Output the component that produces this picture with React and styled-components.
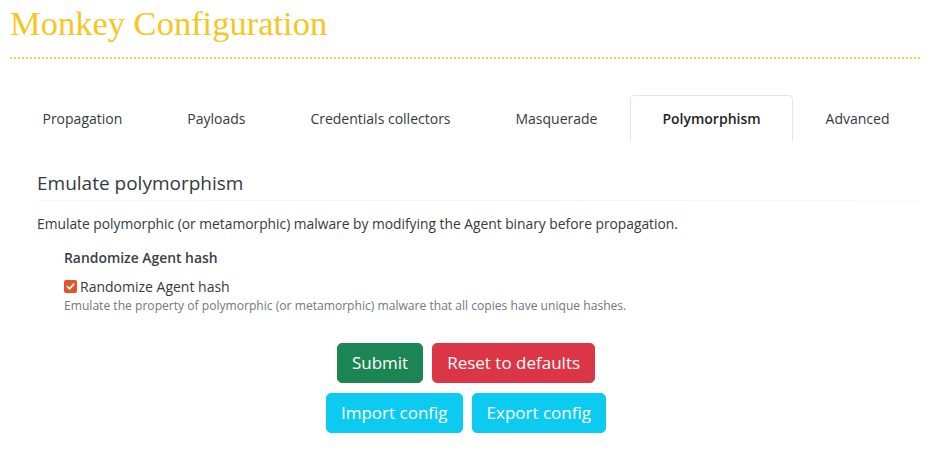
import React from "react";
import styled, { createGlobalStyle } from "styled-components";

const Global = createGlobalStyle`
  html, body { margin: 0; padding: 0; background: #fff; }
  body { font-family: "Open Sans", "Noto Sans", sans-serif; color: #333; }
  * { box-sizing: border-box; }
`;

const Page = styled.div`
  padding: 0 18px 0 10px;
  width: 940px;
`;

const TitleBar = styled.div`
  padding: 1px 0 12px;
  border-bottom: 2px dotted #f8d24e;
  width: 910px;
`;

const Title = styled.h1`
  margin: 0;
  font-family: "Liberation Serif", "DejaVu Serif", serif;
  font-weight: 400;
  font-size: 34.5px;
  line-height: 44px;
  color: #f6c623;
`;

const Tabs = styled.ul`
  list-style: none;
  margin: 36px 0 0;
  padding: 0;
  display: flex;
  width: 912px;
  border-bottom: 1px solid #e3e6ea;
`;

const Tab = styled.li`
  flex: 1 1 auto;
  text-align: center;
  padding: 12px 16px;
  font-size: 14px;
  line-height: 21px;
  margin-bottom: -1px;
  border: 1px solid ${(p) => (p.$active ? "#e3e6ea" : "transparent")};
  border-bottom-color: ${(p) => (p.$active ? "#fff" : "transparent")};
  border-radius: 5px 5px 0 0;
  background: #fff;
  color: ${(p) => (p.$active ? "#1f2326" : "#343a40")};
  font-weight: ${(p) => (p.$active ? 600 : 400)};
`;

const Content = styled.div`
  padding: 30px 0 0 27px;
  width: 912px;
`;

const Heading = styled.h3`
  margin: 0;
  font-size: 19px;
  font-weight: 400;
  line-height: 22px;
  color: #343a40;
`;

const Rule = styled.hr`
  margin: 6px 0 12px;
  border: 0;
  height: 1px;
  background: linear-gradient(to right, #f7f7f7, #f4f4f4 60%, #fafafa);
`;

const Description = styled.p`
  margin: 0;
  font-size: 13.8px;
  line-height: 21px;
  color: #343a40;
`;

const Field = styled.div`
  padding: 13px 0 0 27px;
`;

const FieldLabel = styled.div`
  font-size: 13.9px;
  line-height: 21px;
  font-weight: 600;
  color: #3a3f44;
`;

const CheckRow = styled.label`
  margin-top: 7px;
  display: flex;
  align-items: center;
  gap: 3px;
  font-size: 14px;
  line-height: 21px;
  color: #343a40;
  padding-top: 1px;
`;

const CheckBox = styled.span`
  width: 13px;
  height: 13px;
  border-radius: 2px;
  background: #e2552a;
  display: inline-flex;
  align-items: center;
  justify-content: center;
`;

const Help = styled.div`
  font-size: 12.1px;
  line-height: 18px;
  color: #707880;
`;

const Actions = styled.div`
  margin-top: 28px;
  width: 912px;
  display: flex;
  flex-direction: column;
  align-items: center;
  gap: 10px;
`;

const ButtonRow = styled.div`
  display: flex;
  gap: 9px;
`;

const Button = styled.button`
  font-family: "Open Sans", "Noto Sans", sans-serif;
  font-size: 17px;
  line-height: 24px;
  padding: 7px 14px;
  border: 1px solid ${(p) => p.$bg};
  background: ${(p) => p.$bg};
  color: #fff;
  border-radius: 5px;
`;

export default function App() {
  const tabs = [
    "Propagation",
    "Payloads",
    "Credentials collectors",
    "Masquerade",
    "Polymorphism",
    "Advanced",
  ];
  return (
    <Page>
      <Global />
      <TitleBar>
        <Title>Monkey Configuration</Title>
      </TitleBar>
      <Tabs>
        {tabs.map((t) => (
          <Tab key={t} $active={t === "Polymorphism"}>
            {t}
          </Tab>
        ))}
      </Tabs>
      <Content>
        <Heading>Emulate polymorphism</Heading>
        <Rule />
        <Description>
          Emulate polymorphic (or metamorphic) malware by modifying the Agent binary before propagation.
        </Description>
        <Field>
          <FieldLabel>Randomize Agent hash</FieldLabel>
          <CheckRow>
            <CheckBox>
              <svg width="9" height="9" viewBox="0 0 10 10">
                <path d="M1.5 5.2 L4 7.6 L8.6 2.4" fill="none" stroke="#fff" strokeWidth="1.8" strokeLinecap="round" strokeLinejoin="round" />
              </svg>
            </CheckBox>
            Randomize Agent hash
          </CheckRow>
          <Help>
            Emulate the property of polymorphic (or metamorphic) malware that all copies have unique hashes.
          </Help>
        </Field>
      </Content>
      <Actions>
        <ButtonRow>
          <Button $bg="#1b8553">Submit</Button>
          <Button $bg="#dc3545">Reset to defaults</Button>
        </ButtonRow>
        <ButtonRow>
          <Button $bg="#0dcaf0">Import config</Button>
          <Button $bg="#0dcaf0">Export config</Button>
        </ButtonRow>
      </Actions>
    </Page>
  );
}
